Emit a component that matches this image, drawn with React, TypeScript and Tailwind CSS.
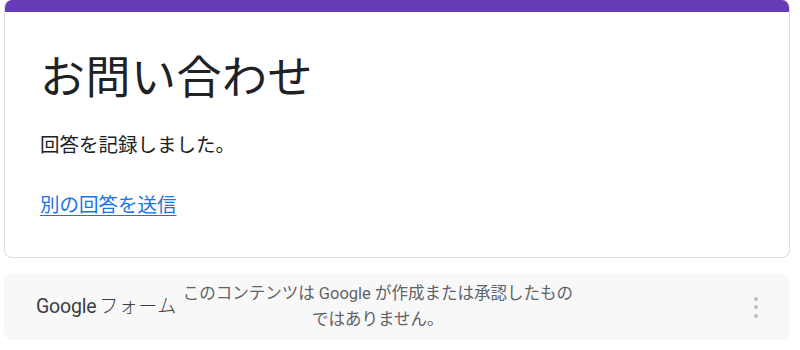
import React from 'react';

const font = { fontFamily: 'Roboto, "Noto Sans CJK JP", sans-serif' };

const App: React.FC = () => {
  return (
    <div className="w-[800px] h-[350px] bg-white overflow-hidden" style={font}>
      <div className="ml-[4px] w-[786px] flex flex-col">
        {/* Card */}
        <div className="rounded-lg overflow-hidden border border-[#dadce0] border-t-0 bg-white">
          <div className="h-[12px] bg-[#673ab7]" />
          <div className="pl-[35px] pr-6 pt-[40px] pb-[36px]">
            <h1 className="text-[45px] leading-[54px] text-[#202124] font-normal tracking-[0.5px]">
              お問い合わせ
            </h1>
            <p className="mt-[25px] text-[19.5px] leading-[30px] text-[#202124]">
              回答を記録しました。
            </p>
            <a
              href="#"
              className="inline-block mt-[30px] text-[19.5px] leading-[30px] text-[#1a73e8] underline underline-offset-[3px]"
            >
              別の回答を送信
            </a>
          </div>
        </div>

        {/* Footer */}
        <div className="mt-[16px] h-[66px] rounded-lg bg-[#f8f8f8] flex items-center pl-[32px] pr-[32px]">
          <div className="flex items-center gap-[3px]">
            <span className="text-[19.5px] text-[#3c4043] tracking-[-0.2px]">Google</span>
            <span className="text-[19px] text-[#3c4043] font-light tracking-[0.5px]">フォーム</span>
          </div>
          <div className="w-[402px] text-center text-[16.5px] leading-[26px] text-[#5f6368]">
            このコンテンツは Google が作成または承認したもの
            <br />
            ではありません。
          </div>
          <div className="flex-1" />
          <div className="flex flex-col items-center gap-[4.5px]">
            <span className="w-[4px] h-[4px] rounded-full bg-[#bdbdbd]" />
            <span className="w-[4px] h-[4px] rounded-full bg-[#bdbdbd]" />
            <span className="w-[4px] h-[4px] rounded-full bg-[#bdbdbd]" />
          </div>
        </div>
      </div>
    </div>
  );
};

export default App;
